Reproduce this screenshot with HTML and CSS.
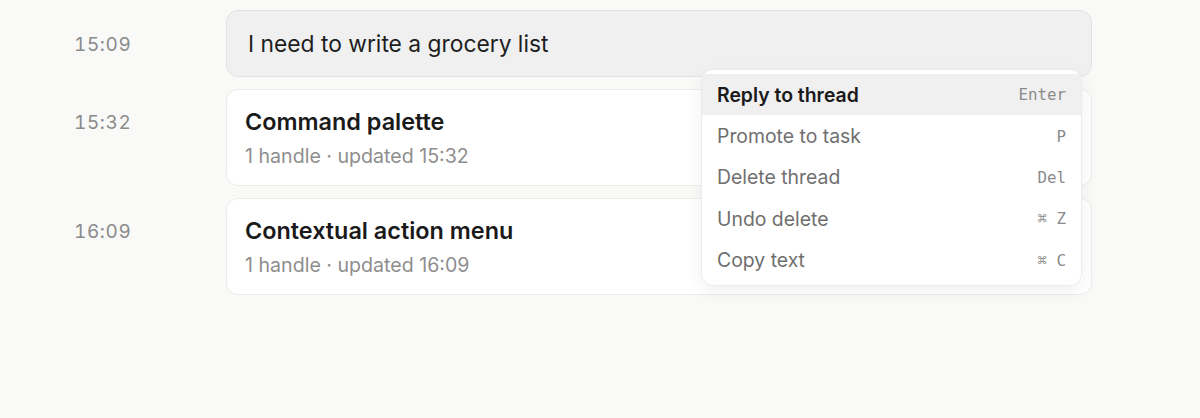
FILE: index.html
```html
<!DOCTYPE html>
<html>
<head>
<meta charset="utf-8">
<link rel="stylesheet" href="styles.css">
</head>
<body>
<div class="timeline">
  <div class="row">
    <div class="time">15:09</div>
    <div class="card draft">I need to write a grocery list</div>
  </div>
  <div class="row">
    <div class="time">15:32</div>
    <div class="card thread">
      <div class="title">Command palette</div>
      <div class="meta">1 handle · updated 15:32</div>
    </div>
  </div>
  <div class="row">
    <div class="time">16:09</div>
    <div class="card thread">
      <div class="title">Contextual action menu</div>
      <div class="meta">1 handle · updated 16:09</div>
    </div>
  </div>
  <div class="menu">
    <div class="item active"><span class="label">Reply to thread</span><span class="key">Enter</span></div>
    <div class="item"><span class="label">Promote to task</span><span class="key">P</span></div>
    <div class="item"><span class="label">Delete thread</span><span class="key">Del</span></div>
    <div class="item"><span class="label">Undo delete</span><span class="key">⌘ Z</span></div>
    <div class="item"><span class="label">Copy text</span><span class="key">⌘ C</span></div>
  </div>
</div>
</body>
</html>
```
FILE: styles.css
```css
* { box-sizing: border-box; }
html, body { margin: 0; padding: 0; }
body {
  background: #f9f9f8;
  font-family: Inter, "Noto Sans", "Liberation Sans", sans-serif;
  color: #1c1c1c;
  width: 1200px;
  height: 418px;
  overflow: hidden;
}
.timeline {
  position: relative;
  padding: 10px 0 0 74px;
  display: flex;
  flex-direction: column;
  gap: 12px;
}
.row {
  display: flex;
  align-items: flex-start;
}
.time {
  width: 152px;
  flex: none;
  font-size: 19px;
  color: #8b8b8b;
  line-height: 24px;
  font-variant-numeric: tabular-nums;
  letter-spacing: 0.6px;
}
.row .time { padding-top: 22px; }
.row:first-child .time { padding-top: 23px; }
.card {
  width: 866px;
  border-radius: 12px;
  border: 1px solid #ececeb;
  background: #fff;
}
.draft {
  background: #f0f0f0;
  border-color: #e2e2e2;
  height: 67px;
  padding: 0 21px;
  display: flex;
  align-items: center;
  font-size: 22.8px;
  color: #1e1e1e;
}
.thread {
  height: 97px;
  padding: 18px 18px 0;
}
.title {
  font-size: 23.4px;
  font-weight: 600;
  line-height: 28px;
  color: #1a1a1a;
}
.meta {
  margin-top: 8px;
  font-size: 19.6px;
  color: #8e8e8e;
  line-height: 24px;
}
.menu {
  position: absolute;
  left: 701px;
  top: 69px;
  width: 381px;
  background: #fff;
  border-radius: 12px;
  border: 1px solid #ececec;
  box-shadow: 0 6px 18px rgba(0,0,0,0.06);
  padding: 4px 0;
}
.item {
  height: 41.4px;
  display: flex;
  align-items: center;
  justify-content: space-between;
  padding: 0 15px;
  font-size: 19.4px;
  color: #6f6f6f;
}
.item.active {
  background: #f0f0f0;
  color: #1a1a1a;
  font-weight: 600;
}
.key {
  font-family: "DejaVu Sans Mono", "Liberation Mono", monospace;
  font-size: 15.8px;
  font-weight: 400;
  color: #8a8a8a;
}
```
